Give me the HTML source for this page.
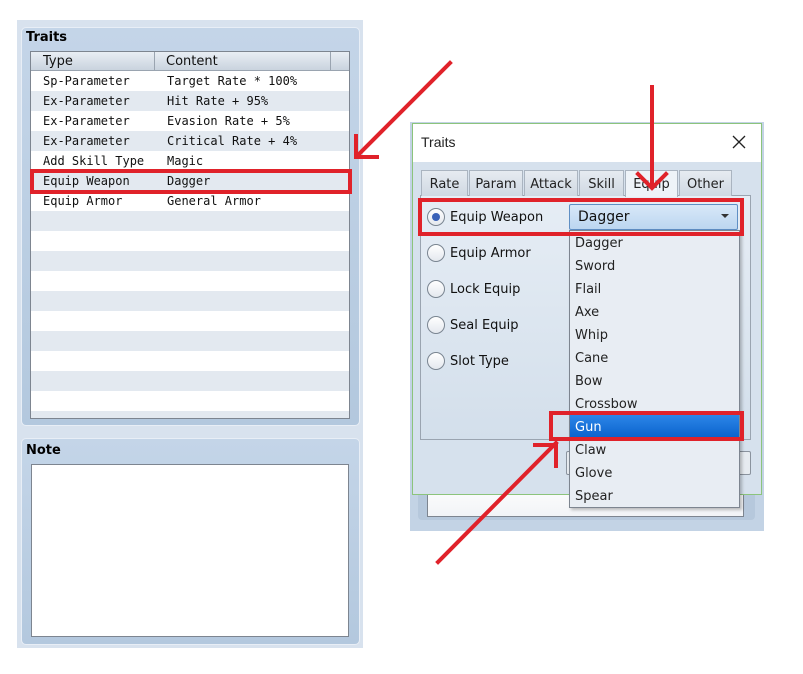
<!DOCTYPE html>
<html><head><meta charset="utf-8"><style>
*{margin:0;padding:0;box-sizing:border-box}
body{width:803px;height:674px;background:#fff;position:relative;overflow:hidden;font-family:"DejaVu Sans","Liberation Sans",sans-serif}
.a{position:absolute}
.grp{background:linear-gradient(#c4d5e8,#b3c8de);border-radius:5px;border:1px solid #e8eef6}
.mono{font-family:"DejaVu Sans Mono","Liberation Mono",monospace;font-size:12px;color:#111}
.row{position:absolute;left:0;width:318px;height:20px;line-height:21px}
.row span{position:absolute}
.ui{font-family:"DejaVu Sans","Liberation Sans",sans-serif;font-size:13px;color:#111}
.tab{position:absolute;top:170px;height:26px;line-height:27px;text-align:center;background:linear-gradient(#e6ebf1,#cfd8e2);border:1px solid #aab4c0;border-bottom:none;font-size:13px;color:#222}
.rad{position:absolute;left:427px;width:18px;height:18px;border-radius:50%;border:1px solid #7a8591;background:linear-gradient(#fff,#e4e8ee)}
.rl{position:absolute;left:450px;font-size:13px;color:#111;font-weight:500}
.it{position:absolute;left:575px;font-size:13px;color:#222}
.red{position:absolute;border:4px solid #e0222a}
</style></head><body>
<div class="a" style="left:17px;top:20px;width:346px;height:628px;background:#d8e2ee"></div>
<div class="a grp" style="left:21px;top:27px;width:339px;height:399px"></div>
<div class="a" style="left:26px;top:30px;font-weight:bold;font-size:13px">Traits</div>
<div class="a" style="left:30px;top:51px;width:320px;height:368px;border:1px solid #7d8590;background:#fff;overflow:hidden">
 <div class="a" style="left:0;top:0;width:318px;height:19px;background:linear-gradient(#e9eef4,#c9d3de);border-bottom:1px solid #9aa4b0"></div>
 <div class="a" style="left:123px;top:0;width:1px;height:19px;background:#9aa4b0"></div>
 <div class="a" style="left:299px;top:0;width:1px;height:19px;background:#9aa4b0"></div>
 <div class="a ui" style="left:12px;top:2px;font-size:13px">Type</div>
 <div class="a ui" style="left:135px;top:2px;font-size:13px">Content</div>
 <div class="mono">
 <div class="row" style="top:19px"><span style="left:12px">Sp-Parameter</span><span style="left:136px">Target Rate * 100%</span></div>
 <div class="row" style="top:39px;background:#e3e9f0"><span style="left:12px">Ex-Parameter</span><span style="left:136px">Hit Rate + 95%</span></div>
 <div class="row" style="top:59px"><span style="left:12px">Ex-Parameter</span><span style="left:136px">Evasion Rate + 5%</span></div>
 <div class="row" style="top:79px;background:#e3e9f0"><span style="left:12px">Ex-Parameter</span><span style="left:136px">Critical Rate + 4%</span></div>
 <div class="row" style="top:99px"><span style="left:12px">Add Skill Type</span><span style="left:136px">Magic</span></div>
 <div class="row" style="top:119px;background:#e3e9f0"><span style="left:12px">Equip Weapon</span><span style="left:136px">Dagger</span></div>
 <div class="row" style="top:139px"><span style="left:12px">Equip Armor</span><span style="left:136px">General Armor</span></div>
 <div class="row" style="top:159px;background:#e3e9f0"></div>
 <div class="row" style="top:199px;background:#e3e9f0"></div>
 <div class="row" style="top:239px;background:#e3e9f0"></div>
 <div class="row" style="top:279px;background:#e3e9f0"></div>
 <div class="row" style="top:319px;background:#e3e9f0"></div>
 <div class="row" style="top:359px;background:#e3e9f0"></div>
 </div>
</div>
<div class="a grp" style="left:21px;top:438px;width:339px;height:207px"></div>
<div class="a" style="left:26px;top:443px;font-weight:bold;font-size:13px">Note</div>
<div class="a" style="left:31px;top:464px;width:318px;height:173px;border:1px solid #7d8590;background:#fff"></div>
<div class="red" style="left:30px;top:169px;width:322px;height:25px"></div>

<div class="a" style="left:410px;top:122px;width:354px;height:409px;background:#c3d3e5"></div>
<div class="a" style="left:418px;top:470px;width:337px;height:50px;background:#b6c8dc;border-radius:4px"></div>
<div class="a" style="left:427px;top:480px;width:317px;height:37px;background:linear-gradient(#fff,#f2f4f7);border:1px solid #7d8590"></div>
<div class="a" style="left:412px;top:123px;width:350px;height:372px;border:1px solid #8cc47c;background:#d6e1ed"></div>
<div class="a" style="left:413px;top:124px;width:348px;height:38px;background:#fff"></div>
<div class="a" style="left:421px;top:134px;font-size:14px;color:#222;font-family:'Liberation Sans',sans-serif">Traits</div>
<svg class="a" style="left:732px;top:135px" width="14" height="14"><path d="M1 1L13 13M13 1L1 13" stroke="#222" stroke-width="1.3"/></svg>
<div class="a" style="left:420px;top:195px;width:331px;height:245px;border:1px solid #9aa4b0;background:linear-gradient(#e6edf5,#d3dfeb)"></div>
<div class="tab" style="left:421px;width:47px">Rate</div>
<div class="tab" style="left:469px;width:54px">Param</div>
<div class="tab" style="left:524px;width:54px">Attack</div>
<div class="tab" style="left:579px;width:45px">Skill</div>
<div class="tab" style="left:625px;width:53px;background:#eef3f8;height:27px">Equip</div>
<div class="tab" style="left:679px;width:53px">Other</div>
<div class="rad" style="top:208px"><div class="a" style="left:4px;top:4px;width:8px;height:8px;border-radius:50%;background:#3a62b8"></div></div>
<div class="rad" style="top:244px"></div>
<div class="rad" style="top:280px"></div>
<div class="rad" style="top:316px"></div>
<div class="rad" style="top:352px"></div>
<div class="rl" style="top:210px">Equip Weapon</div>
<div class="rl" style="top:246px">Equip Armor</div>
<div class="rl" style="top:282px">Lock Equip</div>
<div class="rl" style="top:318px">Seal Equip</div>
<div class="rl" style="top:354px">Slot Type</div>
<div class="a" style="left:566px;top:451px;width:185px;height:24px;border:1px solid #8a939e;background:#e6ebf0;border-radius:2px"></div>
<div class="a" style="left:569px;top:204px;width:169px;height:26px;border:1px solid #5f8fc4;background:linear-gradient(#d8e8f8,#bcd6f0);border-radius:2px"></div>
<div class="a" style="left:578px;top:209px;font-size:14px;color:#111">Dagger</div>
<svg class="a" style="left:721px;top:214px" width="8" height="5"><path d="M0 0H8L4 4Z" fill="#333"/></svg>
<div class="a" style="left:569px;top:230px;width:171px;height:278px;border:1px solid #7d8590;background:#e8edf3;box-shadow:2px 2px 3px rgba(0,0,0,.25)"></div>
<div class="a" style="left:570px;top:415px;width:169px;height:23px;background:linear-gradient(#2c86e8,#0a62cc)"></div>
<div class="it" style="top:236px">Dagger</div>
<div class="it" style="top:259px">Sword</div>
<div class="it" style="top:282px">Flail</div>
<div class="it" style="top:305px">Axe</div>
<div class="it" style="top:328px">Whip</div>
<div class="it" style="top:351px">Cane</div>
<div class="it" style="top:374px">Bow</div>
<div class="it" style="top:397px">Crossbow</div>
<div class="it" style="top:420px;color:#fff">Gun</div>
<div class="it" style="top:443px">Claw</div>
<div class="it" style="top:466px">Glove</div>
<div class="it" style="top:489px">Spear</div>
<div class="red" style="left:418px;top:198px;width:326px;height:38px"></div>
<div class="red" style="left:549px;top:411px;width:195px;height:30px"></div>

<svg class="a" style="left:0;top:0" width="803" height="674">
<g stroke="#e0222a" stroke-width="4" fill="none" stroke-linecap="square">
<path d="M450 63L358 155"/><path d="M356 136V157H377"/>
<path d="M652 87V187"/><path d="M638 174L652 188L666 174"/>
<path d="M438 562L556 443"/><path d="M535 445H556V466"/>
</g></svg>
</body></html>
